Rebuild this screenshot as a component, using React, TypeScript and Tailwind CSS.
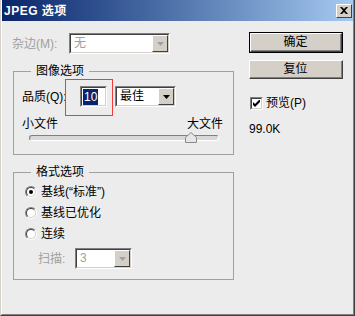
import type { ReactNode } from 'react'

const font = { fontFamily: '"Liberation Sans", "Noto Sans CJK SC", sans-serif' }

function Arrow({ disabled }: { disabled?: boolean }) {
  return (
    <svg width="7" height="4" viewBox="0 0 7 4">
      <path d="M0 0h7L3.5 4z" fill={disabled ? '#a0a0a0' : '#000'} />
    </svg>
  )
}

function Combo({ value, width, disabled }: { value: string; width: string; disabled?: boolean }) {
  return (
    <div className={`${width} h-[21px] border border-t-[#808080] border-l-[#808080] border-b-white border-r-white`}>
      <div className="h-full flex border border-t-[#404040] border-l-[#404040] border-b-[#d4d0c8] border-r-[#d4d0c8] bg-white">
        <div className={`flex-1 pl-[3px] leading-[17px] text-[12px] ${disabled ? 'text-[#a0a0a0]' : 'text-black'}`}>{value}</div>
        <div className="w-[16px] h-full flex items-center justify-center bg-[#d4d0c8] border border-t-white border-l-white border-b-[#404040] border-r-[#404040]">
          <Arrow disabled={disabled} />
        </div>
      </div>
    </div>
  )
}

function Group({ title, height, children }: { title: string; height: string; children: ReactNode }) {
  return (
    <div className={`relative ml-[11px] w-[221px] ${height} border border-[#a0a0a0]`}>
      <div className="absolute -top-[8px] left-[17px] px-[5px] bg-[#ececec] leading-[14px] text-[12px] text-black">{title}</div>
      {children}
    </div>
  )
}

function Radio({ checked, label }: { checked?: boolean; label: string }) {
  return (
    <div className="h-[21px] flex items-center pl-[11px] gap-[4px]">
      <div className="w-[12px] h-[12px] rounded-full border border-t-[#808080] border-l-[#808080] border-b-white border-r-white">
        <div className="w-full h-full rounded-full border border-t-[#404040] border-l-[#404040] border-b-[#d4d0c8] border-r-[#d4d0c8] bg-white flex items-center justify-center">
          {checked && <div className="w-[4px] h-[4px] rounded-full bg-black" />}
        </div>
      </div>
      <span className="leading-[14px] text-[12px] text-black">{label}</span>
    </div>
  )
}

function Button({ label, isDefault, height }: { label: string; isDefault?: boolean; height: string }) {
  const inner = (
    <div className="h-full border border-t-white border-l-white border-b-[#404040] border-r-[#404040]">
      <div className="h-full flex items-center justify-center bg-[#d4d0c8] border-b border-r border-b-[#808080] border-r-[#808080] text-[12px] text-black leading-[14px]">
        {label}
      </div>
    </div>
  )
  return (
    <div className={`w-[94px] ${height} ${isDefault ? 'border border-black' : ''}`}>{inner}</div>
  )
}

export default function App() {
  return (
    <div className="relative w-[355px] h-[316px] border-l border-r border-b border-l-[#d4d0c8] border-r-[#404040] border-b-[#404040]" style={font}>
      <div className="h-full flex flex-col bg-[#ececec] border-l border-r border-b border-l-white border-r-[#808080] border-b-[#808080]">
        <div className="h-[21px] flex items-center justify-between bg-gradient-to-r from-[#0a246a] to-[#a6caf0] pl-[2px] pr-[1px]">
          <span className="text-white font-bold text-[12px] leading-[14px] tracking-[0.5px]">JPEG 选项</span>
          <div className="w-[16px] h-[14px] bg-[#d4d0c8] border border-t-white border-l-white border-b-[#404040] border-r-[#404040] flex items-center justify-center">
            <svg width="8" height="7" viewBox="0 0 8 7">
              <path d="M0 0h2l2 2 2-2h2L5 3.5 8 7H6L4 5 2 7H0l3-3.5z" fill="#000" />
            </svg>
          </div>
        </div>

        <div className="flex flex-1">
          <div className="w-[233px]">
            <div className="pt-[12px] flex items-center pl-[10px]">
              <span className="w-[57px] text-[12px] leading-[14px] text-[#a0a0a0]">杂边(M):</span>
              <Combo value="无" width="w-[101px]" disabled />
            </div>

            <div className="mt-[17px]">
              <Group title="图像选项" height="h-[84px]">
                <div className="pt-[14px] pl-[8px] flex items-center">
                  <span className="w-[58px] text-[12px] leading-[14px] text-black">品质(Q):</span>
                  <div className="w-[27px] h-[21px] border border-t-[#808080] border-l-[#808080] border-b-white border-r-white">
                    <div className="h-full border border-t-[#404040] border-l-[#404040] border-b-[#d4d0c8] border-r-[#d4d0c8] bg-white flex items-center pl-[1px]">
                      <span className="bg-[#0a246a] text-white text-[12px] leading-[16px] px-[1px]">10</span>
                    </div>
                  </div>
                  <div className="ml-[8px]">
                    <Combo value="最佳" width="w-[61px]" />
                  </div>
                </div>
                <div className="mt-[10px] pl-[8px] pr-[10px] flex justify-between text-[12px] leading-[14px] text-black">
                  <span>小文件</span>
                  <span>大文件</span>
                </div>
                <div className="relative mt-[4px] ml-[15px] mr-[14px] h-[6px] rounded-[3px] border border-t-[#808080] border-l-[#808080] border-b-white border-r-white bg-[#d8d8d8]">
                  <svg className="absolute left-[155px] -top-[4px]" width="12" height="11" viewBox="0 0 12 11">
                    <path d="M0.5 10.5V5.5L6 0.5l5.5 5V10.5z" fill="#e6e6e6" stroke="#8a8a8a" />
                  </svg>
                </div>
              </Group>
            </div>

            <div className="mt-[17px]">
              <Group title="格式选项" height="h-[108px]">
                <div className="pt-[8px]">
                  <Radio checked label={'基线(“标准”)'} />
                  <Radio label="基线已优化" />
                  <Radio label="连续" />
                  <div className="mt-[4px] pl-[24px] flex items-center">
                    <span className="w-[37px] text-[12px] leading-[14px] text-[#a0a0a0]">扫描:</span>
                    <Combo value="3" width="w-[57px]" disabled />
                  </div>
                </div>
              </Group>
            </div>
          </div>

          <div className="ml-[14px] pt-[11px] flex flex-col">
            <Button label="确定" isDefault height="h-[21px]" />
            <div className="mt-[7px]">
              <Button label="复位" height="h-[19px]" />
            </div>
            <div className="mt-[17px] flex items-center gap-[3px] pl-[1px]">
              <div className="w-[13px] h-[13px] border border-t-[#808080] border-l-[#808080] border-b-white border-r-white">
                <div className="w-full h-full border border-t-[#404040] border-l-[#404040] border-b-[#d4d0c8] border-r-[#d4d0c8] bg-white flex items-center justify-center">
                  <svg width="7" height="7" viewBox="0 0 7 7">
                    <path d="M0 2v3l2 2 5-5V-1L2 4z" fill="#000" />
                  </svg>
                </div>
              </div>
              <span className="text-[12px] leading-[14px] text-black">预览(P)</span>
            </div>
            <div className="mt-[12px] text-[12px] leading-[14px] text-black">99.0K</div>
          </div>
        </div>
      </div>

      <div className="absolute left-[64px] top-[79px] w-[48px] h-[37px] border border-[#f03c3c]" />
    </div>
  )
}
